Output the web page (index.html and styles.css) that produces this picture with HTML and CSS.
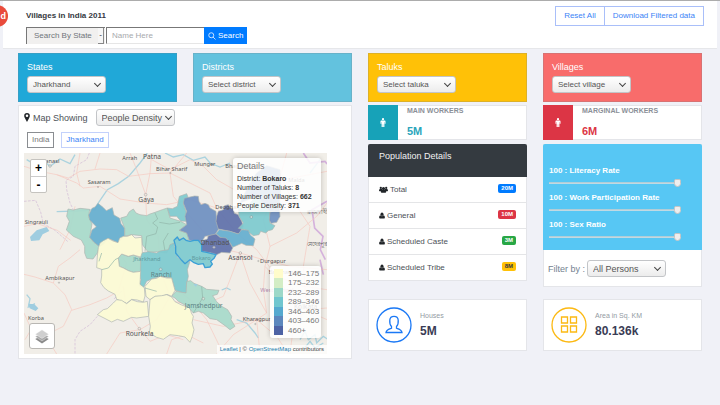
FILE: index.html
```html
<!DOCTYPE html>
<html lang="en">
<head>
<meta charset="utf-8">
<meta name="viewport" content="width=device-width, initial-scale=1">
<title>Villages in India 2011</title>
<link rel="stylesheet" href="styles.css">
</head>
<body>
<svg class="defs" aria-hidden="true">
  <symbol id="user" viewBox="0 0 14 14"><ellipse cx="7" cy="4" rx="3.500" ry="4"/><path d="M3.500 6.500C1.500 7 .3 8.800.3 11.500.3 13 1 14 2.300 14h9.400c1.300 0 2-1 2-2.500 0-2.700-1.200-4.500-3.200-5C9.600 8 8.400 8.800 7 8.800S4.400 8 3.500 6.500z"/></symbol>
  <symbol id="person" viewBox="0 0 10 16"><circle cx="5" cy="2" r="2"/><path d="M2.500 4.500h5C9 4.500 9.500 5.500 9.500 6.500V10H8V7h-.5v9H5.300v-5h-.6v5H2.500V7H2v3H.5V6.500c0-1 .5-2 2-2z"/></symbol>
</svg>

<header class="topbar">
  <a class="badge-logo" href="#">d</a>
  <div class="topbar-row">
    <h1>Villages in India 2011</h1>
    <div class="actions">
      <button type="button">Reset All</button><button type="button">Download Filtered data</button>
    </div>
  </div>
  <form class="search">
    <span class="search-type"><select aria-label="Search type"><option>Search By State</option></select></span>
    <input type="text" placeholder="Name Here" aria-label="Name">
    <button type="button"><svg viewBox="0 0 16 16"><circle cx="6.500" cy="6.500" r="5"/><path d="M10 10l5 5"/></svg>Search</button>
  </form>
</header>

<main class="board">
  <section class="tile states"><label for="state">States</label><span class="pick"><select id="state"><option>Jharkhand</option></select></span></section>
  <section class="tile districts"><label for="district">Districts</label><span class="pick"><select id="district"><option>Select district</option></select></span></section>
  <section class="tile taluks"><label for="taluk">Taluks</label><span class="pick"><select id="taluk"><option>Select taluka</option></select></span></section>
  <section class="tile villages"><label for="village">Villages</label><span class="pick"><select id="village"><option>Select village</option></select></span></section>

  <section class="card map-card">
    <div class="map-head">
      <svg class="pin" viewBox="0 0 10 16"><path fill-rule="evenodd" d="M5 0a5 5 0 0 1 5 5c0 2-.8 3.200-1.600 4.800L5 16 1.600 9.800C.8 8.200 0 7 0 5a5 5 0 0 1 5-5zm0 2.700a2.300 2.300 0 1 0 0 4.600 2.300 2.300 0 0 0 0-4.600z"/></svg>
      <label for="metric">Map Showing</label>
      <span class="pick large"><select id="metric"><option>People Density</option></select></span>
    </div>
    <nav class="crumbs"><a class="muted" href="#">India</a><a href="#">Jharkhand</a></nav>
    <div class="map">
      <svg class="canvas" viewBox="-198 0 909 603" preserveAspectRatio="xMidYMid slice" role="img" aria-label="Districts of Jharkhand">
        <rect class="land" x="-400" y="-200" width="1400" height="1000"/>
        <g class="water">
          <path d="M172 0L150 30 116 70 85 92 52 110 24 151M24 151L15 170-40 174-100 176M-190 20L-165 35-140 22-120 40-90 18-60 32-45 5M225 0L250 12 280 5 310 22 345 12 360 30 390 42 420 30"/>
          <path d="M395 411l15-6 12 6M440 500l30 10 25 30 10 15M630 560l15-25 10 25 20-15 5 25 20-20 15 10M640 590l20-25 15 20 25-15M-190 425l10 12-5 25 20-10M690 20l-30 40"/>
          <path class="lake" d="M-180 252l20-20 30-10 8 12-20 10-10 18-25 2zM-185 452l18 2 12 12-8 8-18-8z"/>
        </g>
        <g class="border">
          <path d="M-2 0L-10 20-45 40-50 70-72 82-70 110-60 150-50 170M-198 145l35-3 15 35 8 35 35 20 40 35M95 415L70 440M22 490L0 515-30 535-45 560-45 603"/>
          <path class="strong" d="M640 0l20 30 45-5 6 8M711 145l-45 25 8 55 25 25-8 40 15 30M690 320l10 45"/>
        </g>
        <g class="roads">
          <path d="M-198 40L-150 55-100 65-65 75-30 55 30 48 80 50 116 70 180 62 240 60 300 90 360 120 380 165M-100 65L-40 90-20 105 30 100 90 138 167 150 230 155 300 140 380 165 440 240 500 290 560 370 640 400 711 410"/>
          <path d="M185 0L180 60 167 125 170 200 205 250 210 340 250 400 300 440 350 500 400 603M120 0L140 50 167 125M185 20L240 50 300 20 340 40 380 80 450 120M-30 0L-40 60-30 100M30 0L15 48M290 0L240 60 250 130 300 190 370 270"/>
          <path d="M-110 390L-165 372-198 364M-110 390L-75 425-55 470-80 520-130 545-180 520-198 480M-55 472L0 455 50 435 85 415 110 330 50 260M-165 510L-195 560M-160 510L-120 570-100 603M-110 390L-95 340-60 315-30 290M150 530L110 475 100 400M150 530L200 500 240 430 210 350M150 530L90 540 50 603M150 530L180 565 230 545 280 560M230 603L245 560 290 545 340 570"/>
          <path d="M370 280L450 300 520 320 600 340 711 350M450 300L420 380 400 430 330 460 250 445M450 300L480 390 530 480 500 500 400 520 310 500M500 500L600 510 650 470 711 465M500 500L510 603M500 500L430 545 380 603M530 480L520 410 525 340 540 280 520 200 560 110 590 0M525 340L580 400 620 460 711 500M540 280L620 240 680 190 711 150M595 603L560 550 500 500M600 603L610 520 650 470 640 340 660 220 600 130 580 80 711 55M-198 220l40-8 60 20 40 30M-90 290l30-60 15-70"/>
        </g>
        <g class="districts-shape">
          <path class="c3" d="M-66 168L-50 171-30 166-1 169-4 191 6 213-1 253 12 268 29 281 22 300 9 318-10 316-16 300-16 280-26 261-50 250-71 231-62 205-70 190z"/>
          <path class="c5" d="M6 166L15 162 24 151 39 163 49 173 67 164 72 186 89 196 93 212 104 226 104 248 84 269 54 256 42 272 29 281 12 268-1 253 6 231 19 221-1 201-4 186z"/>
          <path class="c3" d="M92 195l18-5 8-14 12-8 8 12 12 5 20 3 10-5 15-5 22-8 15-5 8 30 32 10 18 10-22 17 22 8 8 22-36-7-12 20-15 15-5 10-27-4-28 2-18-23-2-27-30-3-21 5v-24z"/>
          <path class="inner" d="M195 180l8 18-15 12 15 12-5 20-28 8-5 45M270 208l-32 5-30-5M235 240l-15 25 5 30"/>
          <path class="c4" d="M232 165l15 2 15-7 6-30 22-8 5 13-15 15 8 25 2 30-18-1-12-14-20 0z"/>
          <path class="c6" d="M280 150l3-14 17-4 14-3 11 1 2 15 6 10 12-4 10 4 5 10 18 10 2 30 8 20-13 20-30 5-10 18-37-6-8-22-22-8 22-17-5-25 5-15z"/>
          <path class="c6" d="M450 150l25-50 25-40 30-22 40 12 2 50-4 70-28 8-40-48z"/>
          <path class="c7" d="M380 190l5-15 15-5 4-12 11-3 6 10 9 2 3 14 12 4 10 20 5 15-5 8-3 8-7 7-25-8-35-7-7-23z"/>
          <path class="c4" d="M445 160l15 10 40-40 40 45v35l15 8-8 12-12 3-8 7-15-5-5 10-17 3-20-16-25-6 15-16-13-20z"/>
          <path class="c6" d="M540 178l28-13 2 25-10 18-17 3-5-10z"/>
          <path class="c5" d="M388 230l32 5 25 8 10-13 20 2 6 14 14 12-5 20-22-1-13-6-27 12-10-17-18-6-22-18z"/>
          <path class="c7" d="M355 248l23-5 12 10 18 2 12 15 8 15-8 15-25-2-15 7-15-5-30-5-3-20 8-13 12-4z"/>
          <path class="c4" d="M152 300l23-4 25 4 10-6 25-4 5-15 12-5 10 42 23 20 15-7-8 25 3 20-5 25v25l-15-2-20-6-10-37-35-5-25 8-15 7-10 20-12-7 5-18-4-10z"/>
          <path class="c3" d="M85 315l10-12 20 7 15-4 22 9v40l-22 3-15-5-15-8-12-5z"/>
          <path class="c1" d="M30 270l10-7 14-7 15 8 15 5 5-14 11-5 12 0 13-5 10 10 20-2 2 45-5 14-22-6-15 4-20-7-10 12 3 25 12 5 15 8 15 5 22-3-2 39 13 10 2 25-5 18-18-6-17-2-15 12-30-12-5-15-20-10-13-10-10-15 3-20 0-20-15-5 2-35 3-25z"/>
          <path class="inner" d="M35 350l20-5 20-25 10-5M35 300l-8 25"/>
          <path class="c1" d="M80 440l15 2 15 10 15-12 17 6 18 2 12-3 4 45-36 5-15-2-25 12-18-6-17 8-23-12-20-10 18-15 12-3 18-17z"/>
          <path class="c1" d="M165 400l20-22 15-2 10-6 20 5 15 0 10 37-10 18-14-6-16 6-20 0-15 10-12-10z"/>
          <path class="c1" d="M180 440l15-10 20-2 15-3 15 7 10 14 20 10 25 9 4 15 6 10-4 20 6 20-5 20-7 18-15-16-20-4-25-3-20 14-20-6-22-13 3-20-5-30z"/>
          <path class="c3" d="M290 385l12-2 10 8 23 9 15 9 37 3-5 12-14 4 12 18 15 14 18 10 12 20-2 10 12 20-15 10-15-12-25-18-20-3-20-17-15-5-15 5-15-18-30-17-10-10-10-5 13-15 30 5z"/>
          <path class="inner" d="M335 400l3 35-28 45M165 405l35 10"/>
          <path class="c4 chosen" d="M252 262l10-10 6 10 12-7 8 7 12 3 12-3 13 0 10 13 0 20 15 3 28 7-6 11-10 9 5 8-7 9-15 2-5-12-15 2-15-6-10-8-15 12-10-10-10-12-8-10 0-20z"/>
          <path class="lake" d="M310 393h12l-4 9z"/>
        </g>
        <g class="places">
          <circle cx="167" cy="125" r="4"/><circle cx="-120" cy="39" r="4"/><circle cx="451" cy="300" r="4"/><circle cx="148" cy="527" r="4"/><circle cx="484" cy="192" r="4"/><circle cx="505" cy="324" r="2"/><circle cx="372" cy="283" r="4"/><circle cx="212" cy="349" r="4"/><circle cx="-93" cy="389" r="2"/><circle cx="241" cy="60" r="2"/><circle cx="24" cy="102" r="2"/><circle cx="496" cy="513" r="2"/><circle cx="340" cy="437" r="4"/>
        </g>
        <g class="names">
          <text x="97" y="20">Arrah</text><text class="big" x="159" y="17">Patna</text><text x="198" y="55">Bihar Sharif</text><text x="313" y="39">Munger</text><text x="406" y="44">Bhagalpur</text><text x="-7" y="94">Sasaram</text><text class="big" x="145" y="147">Gaya</text><text x="-160" y="30">Varanasi</text><text x="-196" y="213">Singrauli</text><text x="376" y="168">Deoghar</text><text class="big" x="332" y="275">Dhanbad</text><text class="big" x="415" y="320">Asansol</text><text x="510" y="330">Durgapur</text><text class="faint" x="305" y="322">Bokaro</text><text class="faint" x="130" y="323">Jharkhand</text><text class="big soft" x="182" y="371">Ranchi</text><text class="big soft" x="284" y="464">Jamshedpur</text><text x="458" y="504">Kharagpur</text><text class="big" x="107" y="548">Rourkela</text><text x="-134" y="381">Ambikapur</text><text x="-186" y="501">Korba</text><text x="536" y="362">Bardhaman</text><text class="region" x="511" y="416">West Bengal</text><text class="big" x="612" y="467">Kolkata</text><text x="595" y="87">Malda</text><text x="650" y="184">রাজশাহী</text><text x="652" y="278">মেহেরপুর</text>
        </g>
      </svg>
      <div class="zoomer"><button type="button" aria-label="Zoom in">+</button><button type="button" aria-label="Zoom out">-</button></div>
      <div class="info"><h2>Details</h2><p>District: <b>Bokaro</b></p><p>Number of Taluks: <b>8</b></p><p>Number of Villages: <b>662</b></p><p>People Density: <b>371</b></p></div>
      <ul class="legend"><li class="k1">146–175</li><li class="k2">175–232</li><li class="k3">232–289</li><li class="k4">289–346</li><li class="k5">346–403</li><li class="k6">403–460</li><li class="k7">460+</li></ul>
      <button class="layers" type="button" aria-label="Layers"><svg viewBox="0 0 26 26"><path fill="#8a8a8a" d="M13 12l11 6-11 7-11-7z"/><path fill="#a9a9a9" stroke="#fff" stroke-width=".6" d="M13 8l11 6-11 7-11-7z"/><path fill="#cfcfcf" stroke="#fff" stroke-width=".6" d="M13 3l11 7-11 7L2 10z"/></svg></button>
      <p class="credit"><a href="#">Leaflet</a> | © <a href="#">OpenStreetMap</a> contributors</p>
    </div>
  </section>

  <div class="column">
    <section class="card worker main-w"><span class="slab"><svg><use href="#person"/></svg></span><div><h2>MAIN WORKERS</h2><strong>5M</strong></div></section>
    <section class="card population">
      <h2>Population Details</h2>
      <ul>
        <li><svg class="wide" viewBox="0 0 20 14"><circle cx="4" cy="3.500" r="2.500"/><circle cx="16" cy="3.500" r="2.500"/><path d="M0 10c0-3 1-4 3-4h4v5H1zM20 10c0-3-1-4-3-4h-4v5h6z"/><circle cx="10" cy="5" r="3.500"/><path d="M4 12c0-3 1.500-4.500 3-4.500h6c1.500 0 3 1.500 3 4.500 0 1.300-.8 2-2 2H6c-1.200 0-2-.7-2-2z"/></svg>Total<span class="tag blue">20M</span></li>
        <li><svg><use href="#user"/></svg>General<span class="tag red">10M</span></li>
        <li><svg><use href="#user"/></svg>Scheduled Caste<span class="tag green">3M</span></li>
        <li><svg><use href="#user"/></svg>Scheduled Tribe<span class="tag yellow">8M</span></li>
      </ul>
    </section>
    <section class="card stat houses"><svg viewBox="0 0 36 36"><circle cx="18" cy="18" r="17"/><path d="M15.500 19.500C14 18 13.500 16 13.800 13c.2-2.600 1.800-3.700 4.200-3.700s4 1.100 4.200 3.700c.3 3-.2 5-1.700 6.500v1.700c3 .8 5.200 1.300 5.500 4.300H10c.3-3 2.500-3.500 5.500-4.300z"/></svg><div><h2>Houses</h2><strong>5M</strong></div></section>
  </div>

  <div class="column">
    <section class="card worker marg-w"><span class="slab"><svg><use href="#person"/></svg></span><div><h2>MARGINAL WORKERS</h2><strong>6M</strong></div></section>
    <section class="card filters">
      <div class="rates">
        <label for="lit">100 : Literacy Rate</label><input id="lit" type="range" value="100">
        <label for="work">100 : Work Participation Rate</label><input id="work" type="range" value="100">
        <label for="sex">100 : Sex Ratio</label><input id="sex" type="range" value="100">
      </div>
      <div class="filter-by"><label for="by">Filter by :</label><span class="pick large"><select id="by"><option>All Persons</option></select></span></div>
    </section>
    <section class="card stat area"><svg viewBox="0 0 36 36"><circle cx="18" cy="18" r="17"/><path d="M10.500 10h6v6h-6zM19.500 10h6v6h-6zM10.500 19h6v6h-6zM19.500 19h6v6h-6z"/></svg><div><h2>Area in Sq. KM</h2><strong>80.136k</strong></div></section>
  </div>
</main>
</body>
</html>
```
FILE: styles.css
```css
* { box-sizing: border-box; }
body { margin: 0; min-height: 100vh; background: #f0f1f7; color: #3c4148; font: 9px/12px "Liberation Sans", Arial, sans-serif; overflow-x: hidden; border-top: 1px solid #acacac; }
h1, h2, p, ul { margin: 0; padding: 0; font-weight: normal; }
ul { list-style: none; }
a { color: #3c83f6; text-decoration: none; }
button, input, select { font: inherit; margin: 0; }
.defs { position: absolute; width: 0; height: 0; }

.topbar { position: relative; margin: 0 3px; padding: 5px 13px 4px 23px; background: #fff; border-bottom: 1px solid #e6e7ea; }
.badge-logo { position: absolute; left: -17px; top: 4px; width: 22px; height: 22px; padding-right: 2px; border-radius: 50%; background: #e94b3c; color: #fff; font-weight: bold; line-height: 22px; text-align: right; }
.topbar-row { display: flex; justify-content: space-between; align-items: center; }
.topbar h1 { color: #33373d; font-size: 8px; font-weight: bold; }
.actions { display: flex; }
.actions button { height: 20px; padding: 0 8px; border: 1px solid #a9bff9; background: #fff; color: #3c83f6; font-size: 8px; }
.actions button + button { margin-left: -1px; }
.search { display: flex; height: 17px; margin-top: 1px; font-size: 8px; }
.search-type { position: relative; display: flex; }
.search-type select { width: 79px; padding: 0 7px; appearance: none; border: solid #777; border-width: 1px 0 0 1px; border-radius: 0; background: #f1f0ef; color: #70757b; }
.search-type::after { content: "-"; position: absolute; right: 1px; top: 1px; bottom: 0; width: 5px; border: solid #888; border-width: 0 1px 1px 0; background: #f6f6f6; color: #222; text-align: center; line-height: 13px; }
.search input { width: 98px; padding: 0 5px; border: solid #777; border-width: 1px 0 0 1px; background: #fff; }
.search input::placeholder { color: #a6a9ad; }
.search > input { margin-left: 1px; border-bottom: 1px solid #e6e6e6; }
.search button { display: flex; align-items: center; gap: 2px; padding: 0 4px; border: 0; background: #007bff; color: #fff; }
.search svg { width: 8px; height: 8px; fill: none; stroke: #fff; stroke-width: 1.5; }

.board { display: grid; grid-template-columns: repeat(4, minmax(0, 1fr)); column-gap: 16px; row-gap: 3px; padding: 4px 18px; align-items: start; }
.tile { padding: 7px 8px 8px; border: 1px solid rgba(120, 130, 140, .25); color: #fff; }
.tile label { display: block; margin-bottom: 3px; }
.states { background: #20a8d8; }
.districts { background: #63c2de; }
.taluks { background: #ffc107; }
.villages { background: #f86c6b; }
.pick { position: relative; display: inline-flex; vertical-align: top; }
.pick select { width: 79px; height: 17px; padding: 0 10px 0 5px; appearance: none; border: 1px solid #c3c5c8; border-radius: 3px; background: linear-gradient(#fff, #ececec); color: #555; font-size: 8px; }
.pick.large select { font-size: 9px; }
.pick::after { content: ""; position: absolute; right: 6px; top: 5px; width: 4px; height: 4px; border: solid #444; border-width: 0 1px 1px 0; transform: rotate(45deg); pointer-events: none; }

.card { border: 1px solid #e4e5e9; background: #fff; }
.map-card { grid-column: span 2; padding: 3px 24px 4px 5px; }
.map-head { display: flex; align-items: center; color: #4d5258; }
.map-head label { margin: 0 8px 0 3px; }
.map-head .pin { width: 6px; height: 9px; fill: #212529; }
.map-head .pick::after { right: 4px; }
.crumbs { display: flex; gap: 7px; margin: 6px 3px 5px; }
.crumbs a { padding: 1px 4px; border: 1px solid #c3d1fb; font-size: 8px; line-height: 12px; }
.crumbs .muted { border-color: #8a8d91; color: #777; }

.map { position: relative; height: 201px; overflow: hidden; }
.canvas { display: block; width: 100%; height: 100%; }
.land { fill: #f1eee8; }
.water path, .border path, .roads path { fill: none; stroke-width: 3; }
.water path { stroke: #abd3df; stroke-width: 4; }
.water .lake, .districts-shape .lake { fill: #9fcde0; stroke: none; }
.border path { stroke: #dccbdc; stroke-dasharray: 8 4; }
.border .strong { stroke: #d5b2dc; stroke-width: 5; stroke-dasharray: none; }
.roads path { stroke: #f6c9bf; stroke-width: 2; }
.districts-shape path { stroke: #aeb5b0; stroke-width: 2; stroke-linejoin: round; fill-opacity: .95; }
.districts-shape .inner { fill: none; stroke: #8fb3a8; }
.districts-shape .c1 { fill: #fbfad5; }
.districts-shape .c3 { fill: #a9dacb; }
.districts-shape .c4 { fill: #80cad0; }
.districts-shape .c5 { fill: #67afd0; }
.districts-shape .c6 { fill: #7191c2; }
.districts-shape .c7 { fill: #6273ac; }
.districts-shape .chosen { stroke: #3b9fd6; stroke-width: 4; }
.places circle { fill: #f1eee8; fill-opacity: .6; stroke: #777; stroke-width: 1; }
.names { font: 17px "Noto Sans", "Open Sans", sans-serif; fill: #555; }
.names .big { font-size: 20px; }
.names .soft { fill: #5d8587; }
.names .faint { fill: #5f9aa0; }
.names .region { fill: #b48ab0; }
.zoomer { position: absolute; left: 6px; top: 6px; width: 17px; border: 1px solid #c5c3bf; border-radius: 2px; background: #fff; }
.zoomer button { display: block; width: 100%; height: 16px; padding: 0; border: 0; background: none; color: #000; font-size: 12px; font-weight: bold; line-height: 16px; }
.zoomer button + button { border-top: 1px solid #ccc; }
.info { position: absolute; right: 6px; top: 5px; min-width: 88px; padding: 3px 4px 2px; border-radius: 3px; background: rgba(255, 255, 255, .85); box-shadow: 0 0 5px rgba(0, 0, 0, .2); color: #333; font-size: 7px; line-height: 9px; }
.info h2 { margin-bottom: 2px; color: #777; font-size: 9px; line-height: 11px; }
.legend { position: absolute; right: 6px; bottom: 16px; display: flex; flex-direction: column; width: 51px; height: 72px; padding: 3px 0 3px 4px; border-radius: 3px; background: rgba(255, 255, 255, .85); box-shadow: 0 0 5px rgba(0, 0, 0, .2); color: #777; font-size: 8px; line-height: 9px; white-space: nowrap; }
.legend li { flex: 1; padding-left: 5px; border-left: 9px solid; }
.legend .k1 { border-color: #fffccb; }
.legend .k2 { border-color: #d3edc5; }
.legend .k3 { border-color: #9cd8c8; }
.legend .k4 { border-color: #70c6cf; }
.legend .k5 { border-color: #55a9cf; }
.legend .k6 { border-color: #5c87bd; }
.legend .k7 { border-color: #4d62a4; }
.layers { position: absolute; left: 5px; bottom: 5px; display: grid; place-items: center; width: 26px; height: 26px; padding: 0; border: 1px solid #b9b7b3; border-radius: 3px; background: #fff; }
.layers svg { width: 16px; height: 16px; }
.credit { position: absolute; right: 0; bottom: 0; padding: 0 3px; background: rgba(255, 255, 255, .75); color: #444; font-size: 6px; line-height: 9px; }
.credit a { color: #1a80b0; }

.column { display: flex; flex-direction: column; min-width: 0; }
.worker { display: flex; height: 35px; margin-bottom: 4px; }
.slab { display: grid; place-items: center; width: 30px; margin: -1px 0 -1px -1px; }
.slab svg { width: 6px; height: 9px; fill: #fff; }
.worker div { padding-left: 9px; }
.worker h2 { margin-bottom: 8px; color: #8b9098; font-size: 7px; font-weight: bold; line-height: 10px; }
.worker strong { display: block; font-size: 11px; line-height: 14px; }
.main-w .slab { background: #17a2b8; }
.main-w strong { color: #2ba5bb; }
.marg-w .slab { background: #dc3545; }
.marg-w strong { color: #dc3545; }
.population { margin-bottom: 18px; }
.population h2 { margin: -1px -1px 0; padding: 6px 11px 15px; border-radius: 2px 2px 0 0; background: #343a40; color: #f1f1f1; font-size: 9px; }
.population li { display: flex; align-items: center; height: 26px; padding: 0 10px; border-bottom: 1px solid #e4e5e7; color: #4b5157; font-size: 8px; }
.population li:last-child { height: 25px; border-bottom: 0; }
.population li svg { width: 6px; height: 7px; margin-right: 2px; fill: #212529; }
.population li .wide { width: 9px; }
.tag { margin: -2px 0 0 auto; padding: 0 3px; border-radius: 2px; color: #fff; font-size: 6px; font-weight: bold; line-height: 9px; }
.blue { background: #007bff; }
.red { background: #dc3545; }
.green { background: #28a745; }
.yellow { background: #ffc107; color: #343a40; }

.stat { display: flex; align-items: center; gap: 8px; height: 52px; padding: 0 7px; }
.stat svg { width: 36px; height: 36px; fill: none; stroke-width: 1.3; }
.houses svg { stroke: #1a78f5; }
.area svg { stroke: #fcb913; }
.stat h2 { color: #939ba3; font-size: 7px; line-height: 12px; }
.stat strong { display: block; color: #3a3c55; font-size: 12px; line-height: 18px; }
.filters { margin-bottom: 12px; }
.rates { display: grid; margin: -1px -1px 0; padding: 19px 21px 6px 6px; border-radius: 2px 2px 0 0; background: #57c7f4; color: #fff; font-size: 8px; font-weight: bold; }
.rates label { line-height: 16px; }
.rates input { width: 100%; height: 7px; margin-bottom: 4px; appearance: none; background: linear-gradient(#a9c7d2, #c9dfe8) center / 100% 2px no-repeat; }
.rates input::-webkit-slider-thumb { appearance: none; width: 7px; height: 8px; background: #eeeeee; border-radius: 2px 2px 4px 4px; border: 1px solid #c4c4c4; }
.filter-by { display: flex; align-items: center; gap: 2px; padding: 10px 4px 9px; color: #73818f; }
```
